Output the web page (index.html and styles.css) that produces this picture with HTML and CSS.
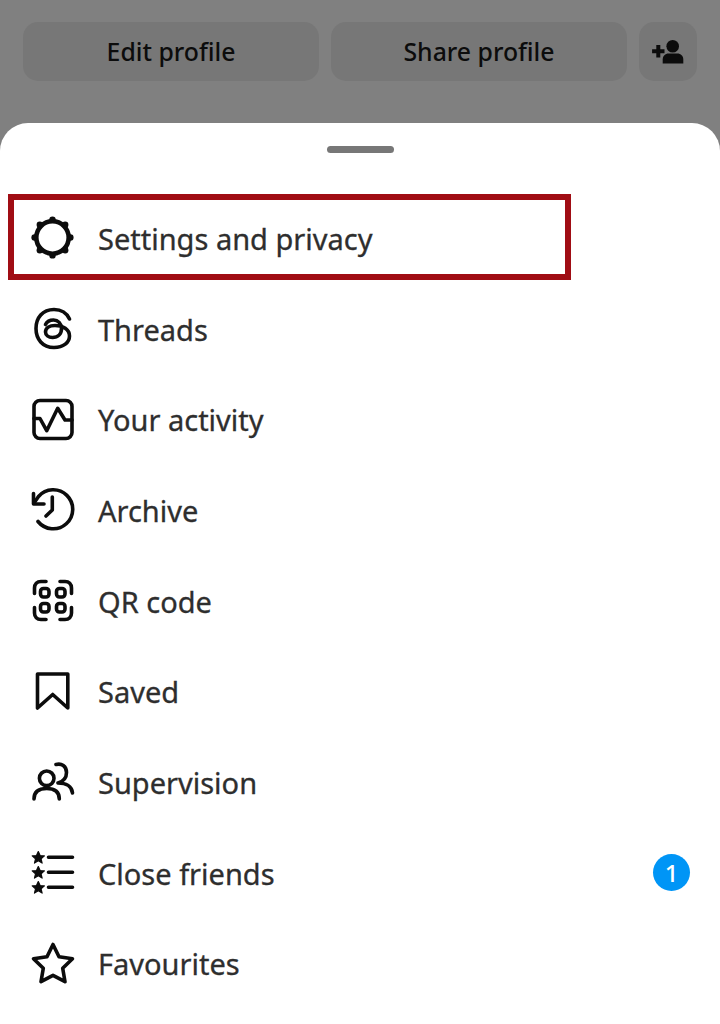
FILE: index.html
```html
<!DOCTYPE html>
<html lang="en">
<head>
  <meta charset="UTF-8">
  <meta name="viewport" content="width=device-width, initial-scale=1.0">
  <title>Profile menu</title>
  <link rel="stylesheet" href="styles.css">
</head>
<body>
  <div class="profile-actions">
    <button class="action-btn">Edit profile</button>
    <button class="action-btn">Share profile</button>
    <button class="action-btn action-icon" aria-label="Add person">
      <svg width="36" height="28" viewBox="0 0 36 28" fill="#0c0c0c">
        <circle cx="22.7" cy="8.2" r="6.3"></circle>
        <path d="M12.7 25.5v-4c0-3.500 2.500-6 6-6h8.600c3.500 0 6 2.500 6 6v4z"></path>
        <path d="M6.300 7h4v4.200h4.200v4h-4.200v4.200h-4v-4.200H2.100v-4h4.200z"></path>
      </svg>
    </button>
  </div>

  <div class="sheet">
    <div class="handle"></div>

    <ul class="menu">
      <li class="menu-item">
        <svg class="icon" viewBox="0 0 48 48">
          <circle class="gear-ring" cx="23.5" cy="22.5" r="16.2"></circle>
          <g class="solid">
            <circle cx="23.5" cy="4.6" r="3.2"></circle>
            <circle cx="36.2" cy="9.8" r="3.2"></circle>
            <circle cx="41.4" cy="22.5" r="3.2"></circle>
            <circle cx="36.2" cy="35.2" r="3.2"></circle>
            <circle cx="23.5" cy="40.4" r="3.2"></circle>
            <circle cx="10.8" cy="35.2" r="3.2"></circle>
            <circle cx="5.6" cy="22.5" r="3.2"></circle>
            <circle cx="10.8" cy="9.8" r="3.2"></circle>
          </g>
        </svg>
        <span class="menu-label">Settings and privacy</span>
        <div class="highlight"></div>
      </li>
      <li class="menu-item">
        <svg class="icon" viewBox="0 0 48 48">
          <path d="M40.500 13C37.500 6.500 31.500 3.500 25 3.500 13.500 3.500 7 12 7 22.500S13.500 41.500 25 41.500c9.500 0 15.500-5 15.500-11.500 0-6.500-6.500-10.500-14.500-10.500-5.500 0-9.500 2.500-9.500 6.500 0 3.200 3 5.500 7 5.500 5.500 0 9-3.500 9-9 0-5-3.500-8.500-8-8.500-3.500 0-6.500 1.500-8 4.500"></path>
        </svg>
        <span class="menu-label">Threads</span>
      </li>
      <li class="menu-item">
        <svg class="icon" viewBox="0 0 48 48">
          <rect x="5" y="3.500" width="38" height="38" rx="6"></rect>
          <path d="M5 21.500h6l6.700 12.200 11-22.400 7.300 11.700h7"></path>
        </svg>
        <span class="menu-label">Your activity</span>
      </li>
      <li class="menu-item">
        <svg class="icon" viewBox="0 0 48 48">
          <path d="M9 34.500A19.500 19.500 0 1 0 9.500 9.500L5 16"></path>
          <path d="M4.500 6.500V17h10.500"></path>
          <path d="M23.300 10v13L17 29"></path>
        </svg>
        <span class="menu-label">Archive</span>
      </li>
      <li class="menu-item">
        <svg class="icon" viewBox="0 0 48 48">
          <path d="M5.500 15.500V10c0-4 2.500-6.500 6.500-6.500h5"></path>
          <path d="M42.500 15.500V10c0-4-2.500-6.500-6.500-6.500h-5"></path>
          <path d="M5.500 29.500V35c0 4 2.500 6.500 6.500 6.500h5"></path>
          <path d="M42.500 29.500V35c0 4-2.500 6.500-6.500 6.500h-5"></path>
          <rect x="11.500" y="10.500" width="8.500" height="8.500" rx="3"></rect>
          <rect x="27.500" y="10.500" width="8.500" height="8.500" rx="3"></rect>
          <rect x="11.500" y="25.500" width="8.500" height="8.500" rx="3"></rect>
          <rect x="27.500" y="25.500" width="8.500" height="8.500" rx="3"></rect>
        </svg>
        <span class="menu-label">QR code</span>
      </li>
      <li class="menu-item">
        <svg class="icon" viewBox="0 0 48 48">
          <path d="M8.500 5H38.800V39L23.700 25.500 8.500 39z"></path>
        </svg>
        <span class="menu-label">Saved</span>
      </li>
      <li class="menu-item">
        <svg class="icon" viewBox="0 0 48 48">
          <circle cx="17.700" cy="19.300" r="7.300"></circle>
          <path d="M5 40c0-6.500 4-10.500 12.700-10.500S30.300 33.500 30.300 40"></path>
          <path d="M27 5.500c5.500-1.500 10.500 1.500 10.500 8 0 5.500-3.500 9-8.500 10.500 8 0 14 3.500 14.500 10"></path>
        </svg>
        <span class="menu-label">Supervision</span>
      </li>
      <li class="menu-item">
        <svg class="icon" viewBox="0 0 48 48">
          <g class="stars">
            <path d="M9.300 1.500l1.800 4 4.300.4-3.300 2.900 1 4.300-3.800-2.300-3.800 2.300 1-4.300-3.300-2.900 4.300-.4z"></path>
            <path d="M9.300 16.500l1.800 4 4.300.4-3.300 2.900 1 4.300-3.800-2.300-3.800 2.300 1-4.300-3.300-2.900 4.300-.4z"></path>
            <path d="M9.300 31.500l1.800 4 4.300.4-3.300 2.900 1 4.300-3.800-2.300-3.800 2.300 1-4.300-3.300-2.900 4.300-.4z"></path>
          </g>
          <path d="M19.500 7.300h24M19.500 22.300h24M19.500 37.300h24"></path>
        </svg>
        <span class="menu-label">Close friends</span>
        <span class="badge">1</span>
      </li>
      <li class="menu-item">
        <svg class="icon" viewBox="0 0 48 48">
          <path d="M24 3.500l6 12.300 13.500 2-9.800 9.500 2.300 13.400-12-6.300-12 6.300 2.300-13.400-9.800-9.500 13.500-2z"></path>
        </svg>
        <span class="menu-label">Favourites</span>
      </li>
    </ul>
  </div>
</body>
</html>
```

FILE: styles.css
```css
* {
  margin: 0;
  padding: 0;
  box-sizing: border-box;
}

body {
  width: 720px;
  height: 1024px;
  overflow: hidden;
  background: #808080;
  font-family: 'Noto Sans', sans-serif;
}

.profile-actions {
  display: flex;
  gap: 12px;
  padding: 22px 23px 42px;
}

.action-btn {
  flex: 1;
  height: 59px;
  border: none;
  border-radius: 15px;
  background: #777777;
  color: #0c0c0c;
  font-family: inherit;
  font-size: 24.8px;
  font-weight: 500;
  padding-bottom: 2px;
}

.action-icon {
  flex: 0 0 58px;
  display: flex;
  align-items: center;
  justify-content: center;
  padding-bottom: 0;
}

.sheet {
  height: 901px;
  background: white;
  border-radius: 28px 28px 0 0;
}

.handle {
  width: 67px;
  height: 7px;
  margin: 0 auto;
  position: relative;
  top: 23px;
  background: #777777;
  border-radius: 4px;
}

.menu {
  list-style: none;
  padding: 64px 30px 0 29px;
}

.menu-item {
  height: 90.7px;
  display: flex;
  align-items: center;
  gap: 21px;
  position: relative;
}

.menu-label {
  flex: 1;
  margin-top: -2px;
  font-size: 29px;
  color: #2e2e2e;
  -webkit-text-stroke: 0.3px #2e2e2e;
}

.icon {
  width: 48px;
  height: 48px;
  fill: none;
  stroke: #0c0c0c;
  stroke-width: 3.6;
  stroke-linecap: round;
  stroke-linejoin: round;
}

.icon .solid {
  fill: #0c0c0c;
  stroke: none;
}

.icon .stars {
  fill: #0c0c0c;
  stroke-width: 1.2;
}

.icon .gear-ring {
  stroke-width: 4.6;
}

.badge {
  width: 37px;
  height: 37px;
  margin-top: -3px;
  border-radius: 50%;
  background: #0095f6;
  color: white;
  font-size: 24px;
  font-weight: 500;
  display: flex;
  align-items: center;
  justify-content: center;
}

.highlight {
  position: absolute;
  left: -21px;
  top: 0;
  width: 563px;
  height: 86px;
  border: 6px solid #a00d14;
}
```
